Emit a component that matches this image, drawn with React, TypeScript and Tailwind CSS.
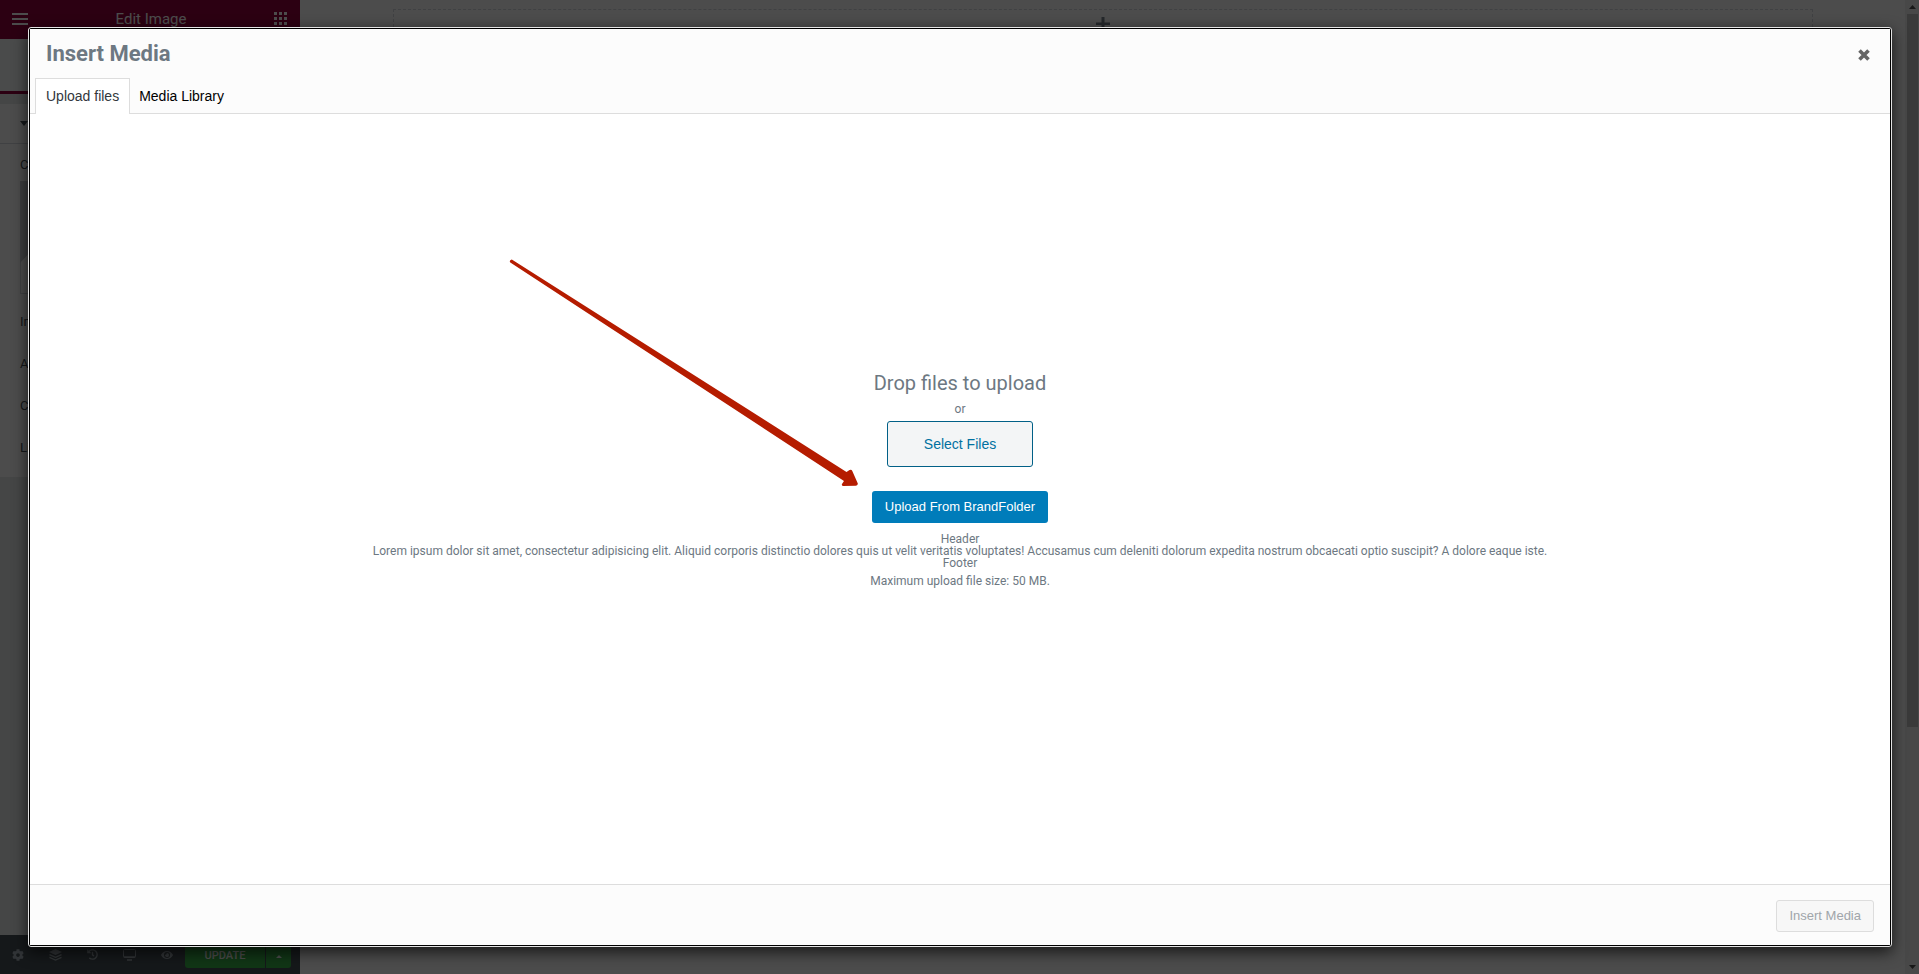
import React from 'react';
import { FaCog, FaHistory, FaEye } from 'react-icons/fa';

const controls = ['Image Size', 'Alignment', 'Caption', 'Link'];

function PanelFooter() {
  return (
    <footer className="flex h-[39px] shrink-0 items-center bg-[#495157] pr-[9px] text-[#a4afb7]">
      <div className="flex flex-1 items-center justify-between pl-3 pr-3">
        <button type="button" aria-label="Settings"><FaCog size={12} /></button>
        <button type="button" aria-label="Navigator">
          <svg width="13" height="12" viewBox="0 0 13 12" fill="none" stroke="currentColor" strokeWidth="1.3">
            <path d="M6.500 0 13 3 6.500 6 0 3z" fill="currentColor" stroke="none" />
            <path d="M0.500 5.600 6.500 8.300l6-2.700M0.500 8.400 6.500 11.100l6-2.700" />
          </svg>
        </button>
        <button type="button" aria-label="History"><FaHistory size={11} /></button>
        <button type="button" aria-label="Responsive mode">
          <svg width="13" height="12" viewBox="0 0 13 12" fill="none" stroke="currentColor">
            <rect x="0.5" y="0.5" width="12" height="8" rx="1" />
            <path d="M1 8h11M4 11h5" strokeWidth="1.6" />
          </svg>
        </button>
        <button type="button" aria-label="Preview changes"><FaEye size={12} /></button>
      </div>
      <button type="button" className="h-[27px] w-20 rounded-l-[3px] bg-[#39b54a] pt-1 text-[11px] font-medium text-white">UPDATE</button>
      <button type="button" aria-label="Save options" className="ml-px flex h-[27px] w-[25px] items-center justify-center rounded-r-[3px] bg-[#39b54a] pt-1 text-white">
        <svg width="6" height="3" viewBox="0 0 6 3" fill="currentColor"><path d="M0 3 3 0l3 3z" /></svg>
      </button>
    </footer>
  );
}

function EditorPanel() {
  return (
    <aside className="flex w-[300px] shrink-0 flex-col bg-[#e6e9ec]">
      <header className="flex h-[39px] shrink-0 items-center justify-between bg-[#93003c] pb-0.5 pl-3 pr-[13px] text-white">
        <button type="button" aria-label="Menu">
          <svg width="16" height="12" viewBox="0 0 16 12" fill="currentColor">
            <path d="M0 0h16v2H0zM0 5h16v2H0zM0 10h16v2H0z" />
          </svg>
        </button>
        <h1 className="text-[15px] leading-5">Edit Image</h1>
        <button type="button" aria-label="Widgets">
          <svg width="13" height="13" viewBox="0 0 13 13" fill="currentColor">
            <path d="M0 0h3v3H0zM5 0h3v3H5zM10 0h3v3h-3zM0 5h3v3H0zM5 5h3v3H5zM10 5h3v3h-3zM0 10h3v3H0zM5 10h3v3H5zM10 10h3v3h-3z" />
          </svg>
        </button>
      </header>
      <div className="h-[55px] shrink-0 border-b-[3px] border-[#93003c] bg-[#f9fafa]" />
      <section className="mt-2.5 bg-white text-[13px] leading-4 text-[#495157]">
        <div className="flex h-10 items-center border-b border-[#d5dadf] pl-5">
          <svg width="8" height="5" viewBox="0 0 8 5" fill="currentColor"><path d="M0 0h8L4 5z" /></svg>
        </div>
        <div className="px-5 pt-[13px]">
          <p>Choose Image</p>
          <svg className="mt-2 h-[113px] w-full" viewBox="0 0 260 113" preserveAspectRatio="xMinYMin slice">
            <rect x="0.5" y="0.5" width="259" height="112" fill="#fff" stroke="#d5dadf" />
            <path d="M0 0h260v40L180 113 110 0 30 50 0 82z" fill="#c8cdd2" />
          </svg>
        </div>
        <div className="flex flex-col gap-[26px] px-5 pb-[21px] pt-5">
          {controls.map((label) => <p key={label}>{label}</p>)}
        </div>
      </section>
      <div className="flex-1" />
      <PanelFooter />
    </aside>
  );
}

function PreviewCanvas() {
  return (
    <div className="flex flex-1 bg-white">
      <div className="flex-1 pl-[93px] pr-[92px] pt-[9px]">
        <div className="flex h-32 justify-center border border-dashed border-[#d5dadf] pt-[7px] text-[#a4afb7]">
          <svg width="14" height="14" viewBox="0 0 14 14" fill="#7d878f"><path d="M5.500 0h3v5.500H14v2.500H8.500v6h-3V8H0V5.500h5.500z" /></svg>
        </div>
      </div>
      <div className="flex w-[14px] flex-col items-center justify-between bg-[#f1f1f1] py-[5px] text-[#505050]">
        <svg width="7" height="4" viewBox="0 0 7 4" fill="currentColor"><path d="M0 4 3.500 0 7 4z" /></svg>
        <div className="mt-[5px] h-[74%] w-[11px] bg-[#c1c1c1]" />
        <div className="flex-1" />
        <svg width="7" height="4" viewBox="0 0 7 4" fill="currentColor"><path d="M0 0 3.500 4 7 0z" /></svg>
      </div>
    </div>
  );
}

function MediaModal() {
  return (
    <div
      role="dialog"
      aria-label="Insert Media"
      className="absolute bottom-[27px] left-7 right-[27px] top-[27px] flex rounded-[3px] border border-[#e4e4e4] bg-black p-px shadow-[0_5px_15px_rgba(0,0,0,0.7)]"
    >
      <div className="flex flex-1 flex-col bg-white">
        <header className="border-b border-[#dddddd] bg-[#fcfcfc]">
          <div className="flex h-[49px] items-center justify-between pl-4 pr-5">
            <h2 className="text-[22px] font-bold leading-[50px] text-[#6d7882]">Insert Media</h2>
            <button type="button" aria-label="Close" className="pt-0.5 text-[#666666]">
              <svg width="12" height="12" viewBox="0 0 12 12" fill="none" stroke="currentColor" strokeWidth="3.600">
                <path d="M1.500 1.500 10.500 10.500M10.500 1.500 1.500 10.500" />
              </svg>
            </button>
          </div>
          <nav className="-mb-px flex pl-[5px] font-['Liberation_Sans',sans-serif] text-sm leading-[18px]">
            <button type="button" className="border border-b-0 border-[#dddddd] bg-white px-2.5 pb-[9px] pt-2 text-[#32373c]">Upload files</button>
            <button type="button" className="px-[9px] pb-[9px] pt-[9px] text-black">Media Library</button>
          </nav>
        </header>
        <main className="flex flex-1 flex-col items-center justify-center pb-[42px] text-center text-xs leading-3 text-[#6d7882]">
          <h3 className="text-xl leading-7">Drop files to upload</h3>
          <p className="mt-1 leading-4">or</p>
          <button type="button" className="mt-1 h-[46px] w-[146px] rounded-[3px] border border-[#016087] bg-[#f3f5f6] font-['Liberation_Sans',sans-serif] text-sm text-[#0071a1]">Select Files</button>
          <div className="relative mt-6">
            <svg className="pointer-events-none absolute -top-[233px] right-[188px]" width="352" height="230" viewBox="508 258 352 230" fill="#b51c00">
              <path d="M511.800 259.400 846.500 472 849.500 470Q851.500 469 852.300 471L857.800 483.500Q858 485.500 856 485.800L843 486Q841 485.200 842.300 483.500L844 480.900 510.300 262.600Q508.800 260.200 511.800 259.400Z" />
            </svg>
            <button type="button" className="h-8 rounded-[3px] bg-[#007cba] px-[13px] font-['Liberation_Sans',sans-serif] text-[13px] text-white">Upload From BrandFolder</button>
          </div>
          <p className="mt-2.5">Header</p>
          <p>Lorem ipsum dolor sit amet, consectetur adipisicing elit. Aliquid corporis distinctio dolores quis ut velit veritatis voluptates! Accusamus cum deleniti dolorum expedita nostrum obcaecati optio suscipit? A dolore eaque iste.</p>
          <p>Footer</p>
          <p className="mt-1.5">Maximum upload file size: 50 MB.</p>
        </main>
        <footer className="flex h-[61px] items-center justify-end border-t border-[#dddddd] bg-[#fcfcfc] pr-4 pt-0.5">
          <button type="button" disabled className="h-8 rounded-[3px] border border-[#dddddd] bg-[#f7f7f7] px-3 font-['Liberation_Sans',sans-serif] text-[13px] text-[#a0a5aa]">Insert Media</button>
        </footer>
      </div>
    </div>
  );
}

export default function App() {
  return (
    <div className="relative flex h-screen overflow-hidden font-[Roboto,sans-serif]">
      <EditorPanel />
      <PreviewCanvas />
      <div className="absolute inset-0 bg-black/70" />
      <MediaModal />
    </div>
  );
}
